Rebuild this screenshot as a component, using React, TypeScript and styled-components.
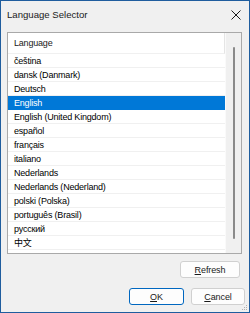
import React from "react";
import styled, { createGlobalStyle } from "styled-components";

const Global = createGlobalStyle`
  html, body { margin: 0; padding: 0; background: #f0f0f0; }
  * { box-sizing: border-box; }
`;

const Window = styled.div`
  position: relative;
  width: 250px;
  height: 313px;
  border: 1px solid #1f5d9e;
  background: #f0f0f0;
  display: flex;
  flex-direction: column;
  font-family: "Liberation Sans", Arial, sans-serif;
  color: #000;
`;

const TitleBar = styled.div`
  height: 31px;
  display: flex;
  align-items: center;
  justify-content: space-between;
  padding: 0 7px 4px 6px;
`;

const Title = styled.span`
  font-size: 9.6px;
  color: #1a1a1a;
`;

const Close = styled.svg`
  width: 10px;
  height: 10px;
  margin-right: 1px;
`;

const ListBox = styled.div`
  margin: 0 7px 0 6px;
  height: 222px;
  border: 1px solid #a9a9a9;
  background: #fff;
  display: grid;
  grid-template-columns: 1fr 16px;
`;

const Items = styled.div`
  display: flex;
  flex-direction: column;
`;

const Header = styled.div`
  height: 21px;
  display: flex;
  align-items: center;
  padding-left: 6px;
  font-size: 9px;
  letter-spacing: -0.2px;
  border-right: 1px solid #e5e5e5;
  border-bottom: 1px solid #f0f0f0;
  color: #1a1a1a;
`;

const Row = styled.div<{ $selected?: boolean }>`
  height: 14px;
  display: flex;
  align-items: center;
  padding-left: 6px;
  font-size: 9px;
  letter-spacing: -0.2px;
  font-family: "Liberation Sans", "Noto Sans CJK SC", Arial, sans-serif;
  background: ${(p) => (p.$selected ? "#0078d7" : "#fff")};
  color: ${(p) => (p.$selected ? "#fff" : "#000")};
  border-bottom: 1px solid ${(p) => (p.$selected ? "#0078d7" : "#f0f0f0")};
`;

const ScrollTrack = styled.div`
  background: #f0f0f0;
  border-left: 1px solid #fafafa;
  display: flex;
  justify-content: center;
  padding: 14px 0 14px 0;
`;

const Thumb = styled.div`
  width: 2px;
  height: 100%;
  border-radius: 1px;
  background: #8a8a8a;
`;

const ButtonRow = styled.div<{ $top: number; $right: number }>`
  display: flex;
  justify-content: flex-end;
  gap: 7px;
  margin-top: ${(p) => p.$top}px;
  padding-right: ${(p) => p.$right}px;
`;

const Button = styled.button<{ $w: number; $default?: boolean }>`
  width: ${(p) => p.$w}px;
  height: 17px;
  padding: 0;
  border-radius: 3px;
  border: 1px solid ${(p) => (p.$default ? "#0067c0" : "#d0d0d0")};
  background: #fdfdfd;
  font-family: "Liberation Sans", Arial, sans-serif;
  font-size: 9px;
  letter-spacing: -0.1px;
  color: #1a1a1a;
  display: flex;
  align-items: center;
  justify-content: center;
  u { text-decoration-thickness: 1px; text-underline-offset: 1px; }
`;

const Grip = styled.svg`
  position: absolute;
  right: 1px;
  bottom: 1px;
  width: 6px;
  height: 6px;
`;

const languages = [
  "čeština",
  "dansk (Danmark)",
  "Deutsch",
  "English",
  "English (United Kingdom)",
  "español",
  "français",
  "italiano",
  "Nederlands",
  "Nederlands (Nederland)",
  "polski (Polska)",
  "português (Brasil)",
  "русский",
  "中文",
];

export default function App() {
  return (
    <>
      <Global />
      <Window>
        <TitleBar>
          <Title>Language Selector</Title>
          <Close viewBox="0 0 10 10">
            <path d="M0.5 0.5 L9.5 9.5 M9.5 0.5 L0.5 9.5" stroke="#1a1a1a" strokeWidth="1" />
          </Close>
        </TitleBar>
        <ListBox>
          <Items>
            <Header>Language</Header>
            {languages.map((l) => (
              <Row key={l} $selected={l === "English"}>
                {l}
              </Row>
            ))}
          </Items>
          <ScrollTrack>
            <Thumb />
          </ScrollTrack>
        </ListBox>
        <ButtonRow $top={7} $right={9}>
          <Button $w={60}>
            <u>R</u>efresh
          </Button>
        </ButtonRow>
        <ButtonRow $top={10} $right={4}>
          <Button $w={55} $default>
            <u>O</u>K
          </Button>
          <Button $w={54}>
            <u>C</u>ancel
          </Button>
        </ButtonRow>
        <Grip viewBox="0 0 6 6">
          <rect x="4" y="0" width="1" height="1" fill="#b0b0b0" />
          <rect x="2" y="2" width="1" height="1" fill="#b0b0b0" />
          <rect x="4" y="2" width="1" height="1" fill="#b0b0b0" />
          <rect x="0" y="4" width="1" height="1" fill="#b0b0b0" />
          <rect x="2" y="4" width="1" height="1" fill="#b0b0b0" />
          <rect x="4" y="4" width="1" height="1" fill="#b0b0b0" />
        </Grip>
      </Window>
    </>
  );
}
